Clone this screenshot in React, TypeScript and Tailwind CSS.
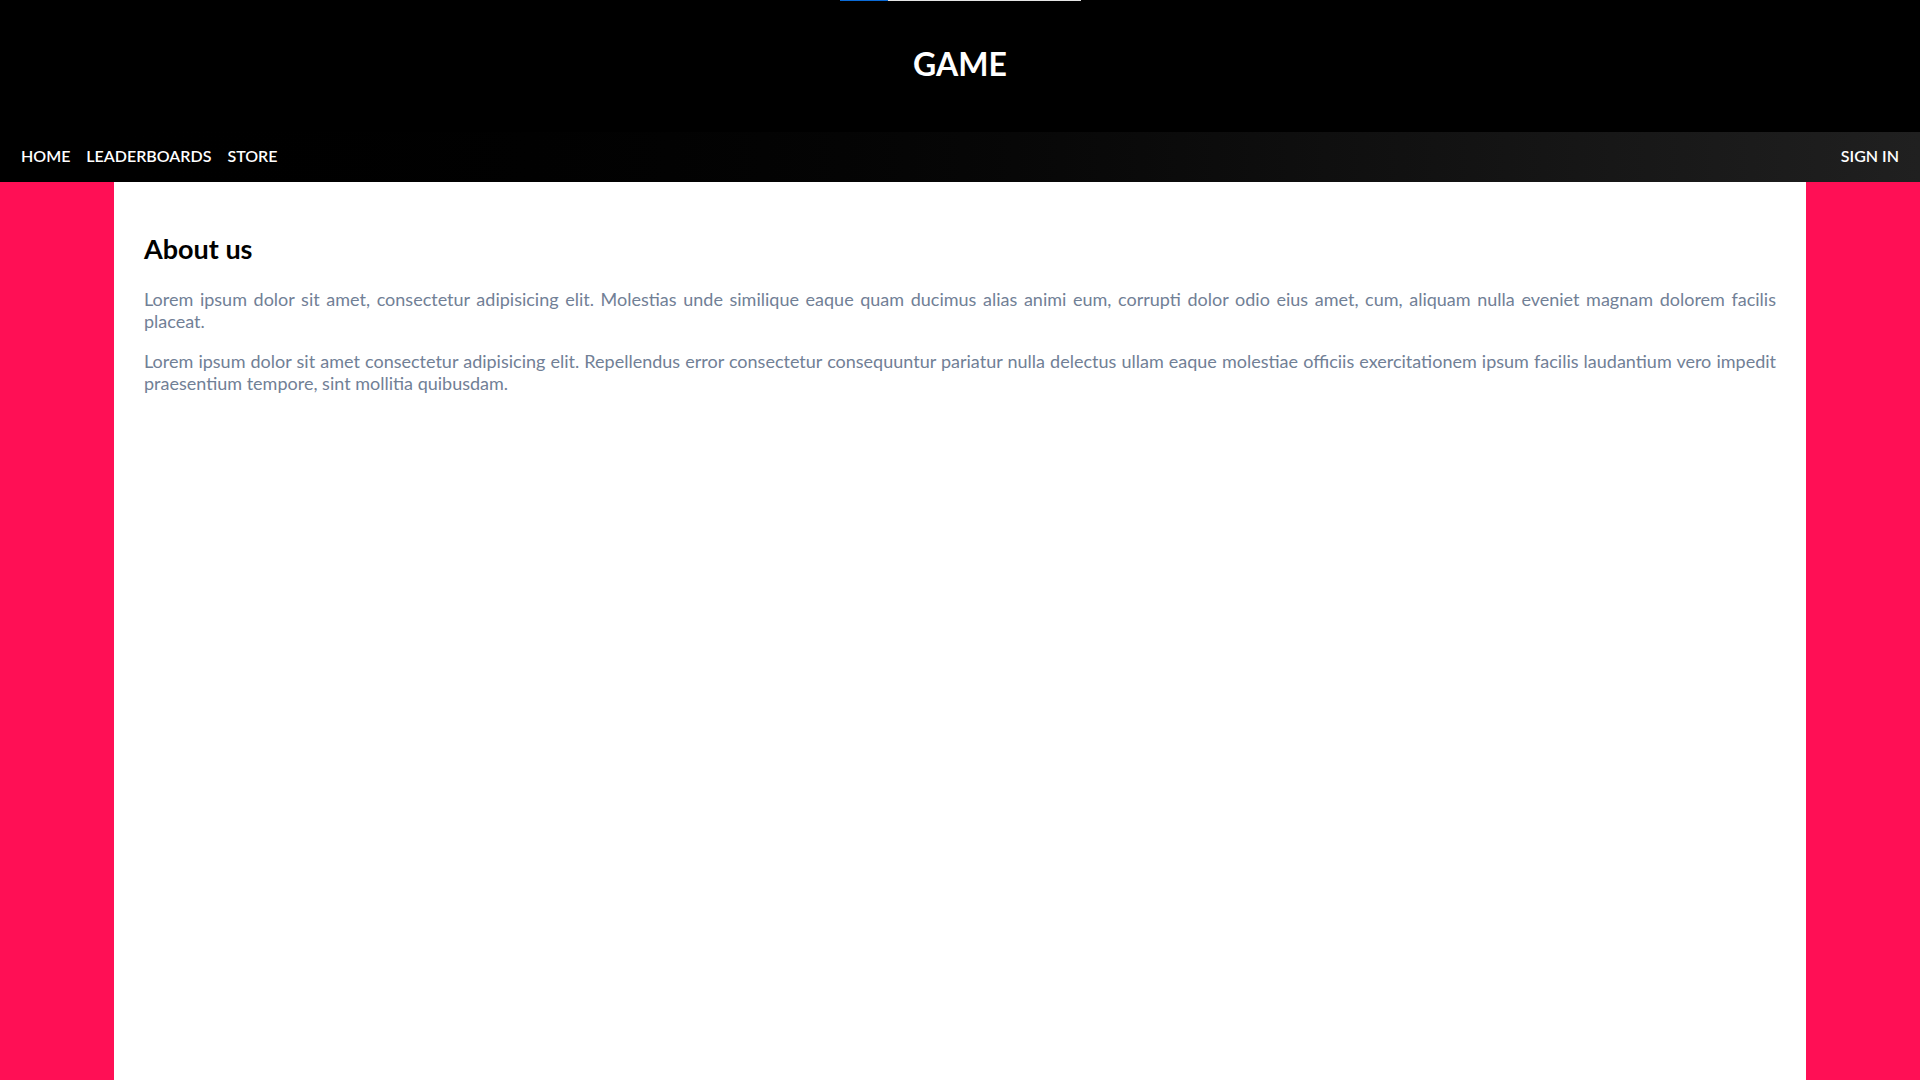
const navLinks = ["HOME", "LEADERBOARDS", "STORE"];

const App = () => {
  return (
    <div className="flex flex-col min-h-screen bg-[#ff0f55] font-['Lato','Noto_Sans',sans-serif]">
      {/* Header */}
      <header className="relative bg-black h-[132px] flex items-center justify-center">
        {/* loading bar */}
        <div className="absolute top-0 left-[840px] w-[241px] h-px flex bg-[#e5e5e5]">
          <div className="w-[48px] h-px bg-[#0a6ad6]"></div>
        </div>
        <h1 className="text-[32px] font-bold text-white pb-1">GAME</h1>
      </header>

      {/* Nav */}
      <nav className="h-[50px] flex items-center justify-between px-[21px] pb-[2px] bg-gradient-to-r from-black to-[#202020]">
        <ul className="flex gap-4">
          {navLinks.map((link) => (
            <li key={link} className="text-white text-[16px] font-semibold">
              {link}
            </li>
          ))}
        </ul>
        <span className="text-white text-[16px] font-semibold">SIGN IN</span>
      </nav>

      {/* Content */}
      <main className="flex-1 mx-[114px] bg-white px-[30px] pt-[50px] pb-[45px]">
        <h2 className="text-[27px] font-bold text-black leading-[34px] mb-[22px]">About us</h2>
        <p className="text-[18px] leading-[22px] text-[#718096] text-justify mb-[18px]">
          Lorem ipsum dolor sit amet, consectetur adipisicing elit. Molestias unde similique eaque quam
          ducimus alias animi eum, corrupti dolor odio eius amet, cum, aliquam nulla eveniet magnam
          dolorem facilis placeat.
        </p>
        <p className="text-[18px] leading-[22px] text-[#718096] text-justify">
          Lorem ipsum dolor sit amet consectetur adipisicing elit. Repellendus error consectetur
          consequuntur pariatur nulla delectus ullam eaque molestiae officiis exercitationem ipsum
          facilis laudantium vero impedit praesentium tempore, sint mollitia quibusdam.
        </p>
      </main>
    </div>
  );
};

export default App;
